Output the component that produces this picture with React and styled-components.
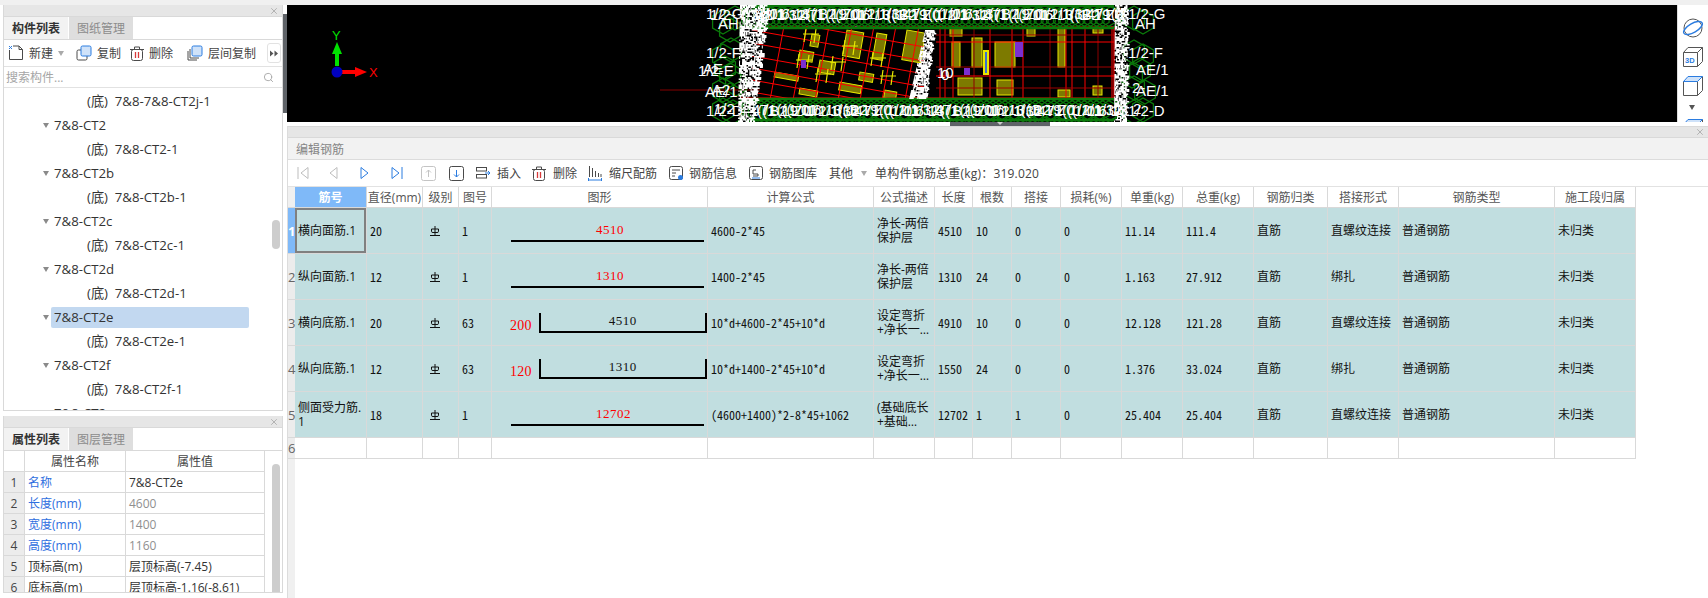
import React from "react";
import styled, { createGlobalStyle } from "styled-components";
import { X, Search } from "lucide-react";

const Global = createGlobalStyle`
  html, body { margin: 0; padding: 0; background: #fff; }
  body { font-family: "Open Sans", "Noto Sans CJK SC", sans-serif; font-size: 12px; color: #333; }
`;

const BLUE = "#2b7ce0";
const INK = "#4a4a4a";

const Page = styled.div`
  width: 1708px; height: 598px; overflow: hidden; background: #fff;
  display: flex; flex-direction: column;
`;
const TopStrip = styled.div`height: 5px; flex: none; background: #f0f0f0;`;
const Main = styled.div`flex: 1; min-height: 0; display: flex;`;
const LeftColumn = styled.div`
  width: 280px; flex: none; margin-left: 3px; display: flex; flex-direction: column; gap: 5px;
`;
const Panel = styled.section`
  border: 1px solid #d9d9d9; border-top: 0; box-sizing: border-box; background: #fff;
  display: flex; flex-direction: column; overflow: hidden; position: relative;
  height: ${p => p.$h}px; flex: none;
`;
const TitleBar = styled.div`
  height: ${p => p.$h ?? 11}px; flex: none; background: #e6e6e6; border-bottom: 1px solid #d9d9d9;
  display: flex; align-items: center; justify-content: flex-end; padding-right: 3px; color: #a8a8a8;
`;
const Tabs = styled.div`display: flex; height: 23px; flex: none; border-bottom: 1px solid #d9d9d9; box-sizing: border-box;`;
const Tab = styled.div`
  width: 64px; margin-right: 1px; display: flex; align-items: center; justify-content: center;
  font-weight: ${p => (p.$active ? 700 : 400)};
  color: ${p => (p.$active ? "#333" : "#8c8c8c")};
  background: ${p => (p.$active ? "#f2f2f2" : "#dedede")};
`;
const ListToolbar = styled.div`
  height: 27px; flex: none; display: flex; align-items: center; padding-left: 4px;
  border-bottom: 1px solid #e2e2e2; box-sizing: border-box; position: relative; color: #444;
`;
const ToolItem = styled.div`
  display: flex; align-items: center; gap: ${p => p.$gap ?? 5}px; margin-right: ${p => p.$mr ?? 12}px;
  margin-left: ${p => p.$ml ?? 0}px; white-space: nowrap; flex: none;
`;
const MoreButton = styled.div`
  position: absolute; right: 1px; top: 3px; width: 12px; height: 18px; border: 1px solid #e2e2e2; border-radius: 3px;
  display: flex; align-items: center; justify-content: center; background: #fff;
`;
const SearchBar = styled.div`
  height: 20px; flex: none; display: flex; align-items: center; justify-content: space-between;
  padding: 0 8px 0 2px; border-bottom: 1px solid #e2e2e2; color: #a6a6a6;
`;
const Tree = styled.div`padding-top: 1px; display: flex; flex-direction: column;`;
const TreeRow = styled.div`
  height: 24px; flex: none; display: flex; align-items: center; white-space: pre; font-size: 13.2px; color: #333;
  padding-left: ${p => (p.$child ? 80 : 39)}px;
`;
const Caret = styled.span`
  width: 0; height: 0; border-left: 3.5px solid transparent; border-right: 3.5px solid transparent;
  border-top: 5px solid ${p => p.$c || "#8a8a8a"}; margin-right: 2px; margin-left: ${p => p.$ml ?? 0}px; flex: none;
`;
const TreeLabel = styled.span`
  height: 21px; line-height: 21px; padding-left: 3px; border-radius: 2px;
  width: ${p => (p.$selected ? "195px" : "auto")};
  background: ${p => (p.$selected ? "#c2d8f0" : "transparent")};
`;
const ScrollThumb = styled.div`
  position: absolute; left: 268px; top: ${p => p.$top}px; width: 8px; height: ${p => p.$h}px; border-radius: 4px; background: #cdcdcd;
`;
const PropTable = styled.table`
  border-collapse: separate; border-spacing: 0; table-layout: fixed; width: 261px;
  td, th { border-right: 1px solid #d9d9d9; border-bottom: 1px solid #d9d9d9; height: 20px; padding: 0; box-sizing: content-box; font-weight: 400; }
`;
const PropHead = styled.th`text-align: center; color: #444;`;
const PropIndex = styled.td`text-align: center; background: #ececec; color: #444;`;
const PropName = styled.td`padding-left: 3px !important; color: ${p => (p.$blue ? "#2f6fe0" : "#333")}; white-space: nowrap;`;
const PropValue = styled.td`padding-left: 3px !important; color: ${p => (p.$muted ? "#8f8f8f" : "#333")}; white-space: nowrap;`;

const RightColumn = styled.div`flex: 1; min-width: 0; display: flex; flex-direction: column;`;
const ViewRow = styled.div`height: 117px; flex: none; display: flex; align-items: center;`;
const Splitter = styled.div`
  width: 4px; height: 99px; flex: none; background: #5f6368; color: #ddd; display: flex; align-items: center; justify-content: center;
`;
const Canvas = styled.div`flex: 1; height: 117px; background: #000; min-width: 0; overflow: hidden;`;
const ViewTools = styled.div`
  width: 31px; height: 117px; flex: none; border-left: 1px solid #ddd; background: #fff; overflow: hidden;
  display: flex; flex-direction: column; align-items: center; padding-top: 13px; box-sizing: border-box; gap: 9px;
`;
const HandleRow = styled.div`height: 4px; flex: none; display: flex; justify-content: center; padding-left: 8px;`;
const Handle = styled.div`
  width: 100px; height: 4px; background: #5f6368; display: flex; justify-content: center;
  &::after { content: ""; border-left: 3px solid transparent; border-right: 3px solid transparent; border-top: 3px solid #ccc; height: 0; }
`;
const EditPanel = styled.section`
  flex: 1; min-height: 0; margin-left: 4px; border-left: 1px solid #dcdcdc; border-top: 1px solid #d9d9d9;
  display: flex; flex-direction: column;
`;
const EditHeader = styled.div`
  height: 21px; flex: none; background: #f2f2f2; border-bottom: 1px solid #dcdcdc; color: #858585;
  display: flex; align-items: center; padding-left: 8px;
`;
const EditToolbar = styled.div`
  height: 26px; flex: none; display: flex; align-items: center; color: #444; border-bottom: 1px solid #e2e2e2; box-sizing: content-box;
`;
const NavButton = styled.div`
  width: ${p => p.$w}px; flex: none; display: flex; align-items: center; justify-content: center;
`;
const Weight = styled.span`margin-left: 6px; white-space: nowrap; letter-spacing: .2px;`;
const GridArea = styled.div`
  flex: 1; background: linear-gradient(90deg, #f0f0f0 7px, transparent 7px); 
`;
const Grid = styled.table`
  border-collapse: separate; border-spacing: 0; table-layout: fixed; width: 1348px;
`;
const Head = styled.th`
  height: 20px; padding: 0; font-weight: ${p => (p.$active ? 700 : 400)};
  background: ${p => (p.$active ? "#7fb9f8" : "#fff")}; color: ${p => (p.$active ? "#fff" : "#555")};
  border-right: 1px solid #d9d9d9; border-bottom: 1px solid #d9d9d9; white-space: nowrap; overflow: hidden; text-align: center;
`;
const Corner = styled.th`padding: 0; background: #f0f0f0; border-bottom: 1px solid #d9d9d9;`;
const RowHead = styled.td`
  padding: 0; text-align: center; overflow: visible; white-space: nowrap; font-size: 13px;
  background: ${p => (p.$active ? "#7fb9f8" : "#ececec")};
  color: ${p => (p.$active ? "#fff" : "#666")}; font-weight: ${p => (p.$active ? 700 : 400)};
  border-bottom: 1px solid #d9d9d9;
`;
const Cell = styled.td`
  height: ${p => (p.$empty ? 20 : 45)}px; padding: 0 0 0 3px; box-sizing: content-box; line-height: 14px; overflow: hidden;
  background: ${p => (p.$empty ? "#fff" : "#c1dee0")}; color: #111;
  border-right: 1px solid #d9d9d9; border-bottom: 1px solid #d9d9d9;
  font-family: ${p => (p.$mono ? `"Noto Sans CJK SC", sans-serif` : `"Open Sans", "Noto Sans CJK SC", sans-serif`)};
  font-feature-settings: ${p => (p.$mono ? `"hwid" 1` : "normal")};
  white-space: nowrap;
`;
const SelectedCell = styled(Cell)`
  box-shadow: inset 0 0 0 2px #808080; padding-left: 3px;
`;
const StraightShape = styled.div`
  margin-left: 16px; width: 193px; border-bottom: 2px solid #000; height: 18px; margin-top: 3px;
  box-sizing: content-box; color: #f00; text-indent: 85px; font-family: "Liberation Serif", serif;
  font-size: 13px; letter-spacing: .5px; line-height: 16px;
`;
const HookShape = styled.div`display: flex; align-items: flex-end; margin-left: 15px; margin-top: 2px;`;
const HookLength = styled.span`
  width: 29px; color: #f00; font-size: 14px; line-height: 16px; font-family: "Liberation Serif", serif; letter-spacing: .2px;
`;
const HookBar = styled.div`
  width: 166px; height: 18px; border: 2px solid #000; border-top: 0; text-align: center; line-height: 15px; color: #111;
  font-family: "Liberation Serif", serif; font-size: 13px; letter-spacing: .5px; margin-bottom: 1px;
`;
const GradeMark = styled.svg`display: block; margin-left: 4px;`;

/* ---------- icons ---------- */
const I = ({ s = 16, w, h, children, vb }) => (
  <svg width={w || s} height={h || s} viewBox={vb || `0 0 ${w || s} ${h || s}`} fill="none" style={{ display: "block", flex: "none" }}>{children}</svg>
);
const NewIcon = () => (
  <I s={16}>
    <path d="M1.5 5v9.5h13V4.5L11 1H5" stroke={INK} />
    <path d="M11 1v3.5h3.5" stroke={INK} />
    <path d="M1 1h1v1H1zM3 1h1v1H3zM2 2h1v1H2zM1 3h1v1H1zM3 3h1v1H3z" fill={BLUE} />
  </I>
);
const CopyIcon = () => (
  <I s={16}>
    <rect x="1" y="5" width="10" height="10" rx="1.5" stroke={INK} />
    <rect x="5" y="1" width="10" height="10" rx="1.5" fill="#cfe2f9" stroke={BLUE} />
  </I>
);
const TrashIcon = () => (
  <I w={14} h={15}>
    <rect x="1.5" y="3.5" width="11" height="11" rx="2" stroke={INK} />
    <path d="M0 3.5h14M4.5 3V1h5v2" stroke={INK} />
    <path d="M5.5 6v6M8.5 6v6" stroke="#d83a3a" strokeWidth="1.3" />
  </I>
);
const FloorCopyIcon = () => (
  <I s={16}>
    <path d="M1 6v9h9M3 4v9h9" stroke={INK} />
    <rect x="5" y="1" width="10" height="10" rx="1.5" fill="#cfe2f9" stroke={BLUE} />
  </I>
);
const More = () => <I w={8} h={7}><path d="M0 .5l3.5 3-3.5 3zM4.5 .5l3.5 3-3.5 3z" fill="#555" /></I>;
const NavFirst = () => <I w={12} h={14}><path d="M1 1v12M11 1.5L4 7l7 5.5z" stroke="#bdbdbd" /></I>;
const NavPrev = () => <I w={9} h={14}><path d="M8 1.5L1 7l7 5.5z" stroke="#bdbdbd" /></I>;
const NavNext = () => <I w={9} h={14}><path d="M1 1.5L8 7l-7 5.5z" stroke={BLUE} /></I>;
const NavLast = () => <I w={12} h={14}><path d="M11 1v12M1 1.5L8 7l-7 5.5z" stroke={BLUE} /></I>;
const UpBox = () => <I s={15}><rect x=".5" y=".5" width="14" height="14" rx="2" stroke="#c4c4c4" /><path d="M7.5 11V4M5 6.5l2.5-2.5L10 6.5" stroke="#c4c4c4" /></I>;
const DownBox = () => <I s={15}><rect x=".5" y=".5" width="14" height="14" rx="2" stroke={INK} /><path d="M7.5 4v7M5 8.5L7.5 11 10 8.5" stroke={BLUE} /></I>;
const InsertIcon = () => <I w={15} h={12}><rect x=".5" y=".5" width="10" height="3.5" stroke={INK} /><rect x=".5" y="7.5" width="10" height="3.5" stroke={INK} /><path d="M9 6h5M12 4l2 2-2 2" stroke={BLUE} /></I>;
const ScaleIcon = () => <I w={14} h={15}><path d="M1.5 0v11M4.5 2v9M7.5 5v6M10.5 7v4M13 8v3" stroke={INK} /><path d="M0 14h14M.5 12v3M13.5 12v3" stroke={BLUE} /></I>;
const InfoIcon = () => <I s={15}><rect x=".5" y=".5" width="13" height="13" rx="2" stroke={INK} /><path d="M3 4h8M3 7h4M3 10h3" stroke={INK} /><circle cx="11.5" cy="11.5" r="2.5" fill={BLUE} /></I>;
const LibraryIcon = () => <I s={15}><rect x=".5" y=".5" width="13" height="13" rx="2" stroke={INK} /><path d="M4 8V4h3M4 8h5v2H4" stroke={INK} /><path d="M3 12h8" stroke={BLUE} /></I>;
const SphereIcon = () => <I w={22} h={20}><ellipse cx="11" cy="10" rx="9" ry="9" stroke="#555" /><ellipse cx="11" cy="10" rx="10.5" ry="4.5" transform="rotate(-30 11 10)" stroke={BLUE} strokeWidth="1.4" /></I>;
const Cube3D = () => (
  <svg width="20" height="20" viewBox="0 0 20 20" fill="none" style={{ display: "block", flex: "none" }}>
    <path d="M.5 5.5h14v14H.5zM.5 5.5L5 .5h14.5v14l-5 5M14.5 5.5l5-5" stroke="#555" />
    <text x="2" y="16" fontSize="7.5" fontWeight="700" fill={BLUE} fontFamily="Liberation Sans">3D</text>
  </svg>
);
const CubeTop = ({ fill }) => <I s={20}><path d="M.5 5.5h14v14H.5zM14.5 19.5l5-5V.5" stroke="#555" /><path d="M.5 5.5L5 .5h14.5l-5 5z" fill={fill} stroke={BLUE} /></I>;
const Grade = () => (
  <GradeMark width="10" height="10" viewBox="0 0 10 10" fill="none">
    <path d="M1.5 3v2.5Q1.5 6.5 3 6.5h4Q8.5 6.5 8.5 5.5V3zM5 0v9M0 9.5h10" stroke="#111" />
  </GradeMark>
);

/* ---------- CAD drawing ---------- */
const rnd = (() => { let s = 4711; return () => ((s = (s * 16807) % 2147483647) / 2147483647); })();
const noise = (x0top, x1top, x0bot, x1bot, yTop, yBot, density = 0.7) => {
  let d = "";
  for (let y = yTop; y < yBot; y += 1.5) {
    const t = (y - yTop) / (yBot - yTop);
    const a = x0top + (x0bot - x0top) * t, b = x1top + (x1bot - x1top) * t;
    for (let x = a; x < b; x += 1.5) {
      if (rnd() < density) {
        const w = 1 + Math.floor(rnd() * 3);
        d += `M${x.toFixed(1)} ${y}h${w}v1.5h-${w}z`;
      }
    }
  }
  return d;
};
const hex = (cx, cy, r) => {
  const p = [];
  for (let i = 0; i < 6; i++) { const a = Math.PI / 3 * i + Math.PI / 6; p.push(`${(cx + r * Math.cos(a)).toFixed(1)},${(cy + r * Math.sin(a)).toFixed(1)}`); }
  return p.join(" ");
};
const bandTexts = ["1/2", "1/1", "1/12", "31", "47", "/1", "(((", "1/01", "11", "6", "13", "((1", "B2", "19", "Z0"];
const topX = Array.from({ length: 30 }, (_, i) => 752 + i * 12.2);
const hexRows = [];
topX.forEach(x => { hexRows.push([x, 16, 12]); hexRows.push([x + 6, 17, 11]); hexRows.push([x, 111, 12]); hexRows.push([x + 6, 110, 11]); });
[[723, 22], [730, 30], [735, 18], [723, 56], [731, 50], [725, 68], [730, 75], [723, 90], [730, 95], [736, 84], [723, 110], [733, 112],
 [1143, 22], [1134, 18], [1143, 56], [1134, 52], [1140, 70], [1132, 76], [1145, 92], [1134, 88], [1143, 110], [1134, 112]]
  .forEach(([x, y]) => hexRows.push([x, y, 12]));

const sideLabels = [
  [706, 19, "1/2-G"], [718, 29, "AH"], [710, 20, "1/2-"], [706, 58, "1/2-F"], [698, 76, "1/2-E"], [703, 74, "AE"], [705, 97, "AE/1"], [712, 95, "A2"], [706, 116, "1/2-D"], [714, 114, "1/2"],
  [1128, 19, "1/2-G"], [1135, 29, "AH"], [1128, 58, "1/2-F"], [1136, 75, "AE/1"], [1136, 96, "AE/1"], [1132, 93, "2-"], [1128, 116, "1/2-D"], [1133, 114, "2"],
  [937, 78, "10"], [941, 80, "0"],
];
const oliveLeft = [
  [847, 30, 17, 26], [877, 33, 10, 26], [907, 30, 19, 30], [800, 50, 14, 10], [820, 60, 16, 12], [860, 72, 14, 8], [840, 82, 22, 8], [775, 72, 24, 5], [800, 88, 18, 6], [885, 90, 12, 8], [812, 34, 8, 12],
];
const oliveRight = [[995, 42, 20, 25], [972, 38, 10, 29], [952, 42, 8, 25], [1058, 28, 7, 39], [958, 78, 24, 17], [997, 80, 16, 15], [1058, 90, 12, 7], [1093, 86, 9, 9], [1093, 28, 10, 5], [1027, 28, 8, 8], [950, 28, 12, 8]];
const redV = [940, 945, 953, 974, 990, 1012, 1023, 1050, 1066, 1072, 1085, 1098, 1112];
const redH = [35, 42, 67, 76, 88];
const noisePaths = [
  noise(740, 768, 738, 754, 5, 122),
  noise(1115, 1127, 1114, 1127, 5, 122),
  noise(925, 934, 909, 926, 30, 99, 0.75),
];
const CadDrawing = () => (
  <svg width="1389" height="117" viewBox="287 5 1389 117" style={{ display: "block" }} fontFamily="Liberation Sans">
    <defs>
      <clipPath id="cad-left"><rect x="752" y="26" width="172" height="72" /></clipPath>
    </defs>
    <path d="M660 90h100" stroke="#5a0000" strokeWidth="1.5" />
    <g clipPath="url(#cad-left)">
      {oliveLeft.map(([x, y, w, h], i) => (
        <rect key={i} x={x} y={y} width={w} height={h} fill="#7d7a00" stroke="#e8e800" strokeWidth="1" transform={`rotate(10 ${x} ${y})`} />
      ))}
      {[770, 793, 815, 838, 860, 882, 905].map((x, i) => (
        <path key={i} d={`M${x + 14} 26L${x} 100`} stroke="#f00" strokeWidth="1" />
      ))}
      {[16, 30, 43, 56, 68, 80, 92].map((y, i) => (
        <path key={i} d={`M752 ${y}L930 ${y + 32}`} stroke="#f00" strokeWidth="1" />
      ))}
      {[[803, 34], [842, 46], [870, 58], [815, 74], [880, 76], [796, 60], [830, 62]].map(([x, y], i) => (
        <path key={i} d={`M${x} ${y}h16M${x + 3} ${y - 6}l-2 14M${x + 13} ${y - 5}l-2 14`} stroke="#e8e800" strokeWidth="1.2" fill="none" />
      ))}
      <rect x="801" y="60" width="5" height="8" fill="#7a2fd0" />
      <rect x="855" y="26" width="5" height="2" fill="#7a2fd0" />
    </g>
    {oliveRight.map(([x, y, w, h], i) => (
      <rect key={i} x={x} y={y} width={w} height={h} fill="#7d7a00" stroke="#e8e800" strokeWidth="1" />
    ))}
    {redV.map((x, i) => <path key={i} d={`M${x} 26V98`} stroke={i % 4 === 3 ? "#8b0000" : "#f00"} strokeWidth="1" />)}
    {redH.map((y, i) => <path key={i} d={`M936 ${y}H1114`} stroke={i % 2 ? "#f00" : "#a00000"} strokeWidth="1" />)}
    <path d="M752 27H1114M740 98H1114M1114 27V98" stroke="#f00" strokeWidth="1.2" fill="none" />
    <rect x="1015" y="42" width="8" height="15" fill="#7a2fd0" />
    <rect x="964" y="68" width="6" height="7" fill="#7a2fd0" />
    <rect x="983" y="50" width="6" height="25" fill="#e8e800" />
    <rect x="985" y="52" width="2" height="21" fill="#3a6fd0" />
    <g fill="none" stroke="#0b7a0b" strokeWidth="1.3">
      {hexRows.map(([x, y, r], i) => <polygon key={i} points={hex(x, y, r)} />)}
    </g>
    <path d="M752 6H1114M752 28H1114M752 99H1114M752 120H1114" stroke="#0b7a0b" strokeWidth="2.5" />
    <path d={noisePaths.join("")} fill="#fff" />
    <g fill="#fff" fontSize="15">
      {topX.map((x, i) => <text key={"t" + i} x={x} y={20}>{bandTexts[i % bandTexts.length]}</text>)}
      {topX.map((x, i) => <text key={"u" + i} x={x + 5} y={19}>{bandTexts[(i + 7) % bandTexts.length]}</text>)}
      {topX.map((x, i) => <text key={"b" + i} x={x} y={115}>{bandTexts[(i + 4) % bandTexts.length]}</text>)}
      {topX.map((x, i) => <text key={"c" + i} x={x + 5} y={116}>{bandTexts[(i + 11) % bandTexts.length]}</text>)}
      {sideLabels.map(([x, y, t]) => <text key={`${x}-${y}`} x={x} y={y}>{t}</text>)}
    </g>
    <g>
      <path d="M337 66V53" stroke="#00e000" strokeWidth="4" />
      <path d="M337 42l5 12h-10z" fill="#00e000" />
      <path d="M341 72h15" stroke="#f00" strokeWidth="4" />
      <path d="M367 72l-12-5v10z" fill="#f00" />
      <circle cx="337" cy="72" r="5.5" fill="#0000c0" />
      <text x="332" y="40" fontSize="13" fill="#00e000">Y</text>
      <text x="369" y="77" fontSize="13" fill="#f00">X</text>
    </g>
  </svg>
);

/* ---------- data ---------- */
const treeRows = [
  { child: 1, t: "(底)  7&8-7&8-CT2j-1" },
  { t: "7&8-CT2" }, { child: 1, t: "(底)  7&8-CT2-1" },
  { t: "7&8-CT2b" }, { child: 1, t: "(底)  7&8-CT2b-1" },
  { t: "7&8-CT2c" }, { child: 1, t: "(底)  7&8-CT2c-1" },
  { t: "7&8-CT2d" }, { child: 1, t: "(底)  7&8-CT2d-1" },
  { t: "7&8-CT2e", sel: 1 }, { child: 1, t: "(底)  7&8-CT2e-1" },
  { t: "7&8-CT2f" }, { child: 1, t: "(底)  7&8-CT2f-1" },
  { t: "7&8-CT2g" },
];
const props = [
  ["名称", "7&8-CT2e", 1, 0], ["长度(mm)", "4600", 1, 1], ["宽度(mm)", "1400", 1, 1], ["高度(mm)", "1160", 1, 1],
  ["顶标高(m)", "层顶标高(-7.45)", 0, 0], ["底标高(m)", "层顶标高-1.16(-8.61)", 0, 0],
];
const cols = [
  ["", 7], ["筋号", 72], ["直径(mm)", 56], ["级别", 36], ["图号", 33], ["图形", 216], ["计算公式", 166], ["公式描述", 61], ["长度", 38], ["根数", 39],
  ["搭接", 49], ["损耗(%)", 61], ["单重(kg)", 61], ["总重(kg)", 71], ["钢筋归类", 74], ["搭接形式", 71], ["钢筋类型", 156], ["施工段归属", 81],
];
const D1 = ["净长-两倍", "保护层"], D2 = ["设定弯折", "+净长一…"], D3 = ["(基础底长", "+基础…"];
const bars = [
  { name: ["横向面筋.1"], dia: "20", no: "1", shape: ["s", "4510"], f: "4600-2*45", d: D1, len: "4510", n: "10", lap: "0", u: "11.14", tot: "111.4", joint: "直螺纹连接" },
  { name: ["纵向面筋.1"], dia: "12", no: "1", shape: ["s", "1310"], f: "1400-2*45", d: D1, len: "1310", n: "24", lap: "0", u: "1.163", tot: "27.912", joint: "绑扎" },
  { name: ["横向底筋.1"], dia: "20", no: "63", shape: ["h", "4510", "200"], f: "10*d+4600-2*45+10*d", d: D2, len: "4910", n: "10", lap: "0", u: "12.128", tot: "121.28", joint: "直螺纹连接" },
  { name: ["纵向底筋.1"], dia: "12", no: "63", shape: ["h", "1310", "120"], f: "10*d+1400-2*45+10*d", d: D2, len: "1550", n: "24", lap: "0", u: "1.376", tot: "33.024", joint: "绑扎" },
  { name: ["侧面受力筋.", "1"], dia: "18", no: "1", shape: ["s", "12702"], f: "(4600+1400)*2-8*45+1062", d: D3, len: "12702", n: "1", lap: "1", u: "25.404", tot: "25.404", joint: "直螺纹连接" },
];
const Lines = ({ v }) => v.map((l, i) => <React.Fragment key={i}>{i > 0 && <br />}{l}</React.Fragment>);

const Shape = ({ s }) =>
  s[0] === "s" ? (
    <StraightShape>{s[1]}</StraightShape>
  ) : (
    <HookShape><HookLength>{s[2]}</HookLength><HookBar>{s[1]}</HookBar></HookShape>
  );

export default function App() {
  return (
    <Page>
      <Global />
      <TopStrip />
      <Main>
        <LeftColumn>
          <Panel $h={406}>
            <TitleBar><X size={10} /></TitleBar>
            <Tabs><Tab $active>构件列表</Tab><Tab>图纸管理</Tab></Tabs>
            <ListToolbar>
              <ToolItem $mr={5}><NewIcon />新建</ToolItem>
              <ToolItem $mr={10}><Caret $c="#aaa" /></ToolItem>
              <ToolItem $mr={9}><CopyIcon />复制</ToolItem>
              <ToolItem $mr={14}><TrashIcon />删除</ToolItem>
              <ToolItem><FloorCopyIcon />层间复制</ToolItem>
              <MoreButton><More /></MoreButton>
            </ListToolbar>
            <SearchBar>搜索构件...<Search size={11} color="#a6a6a6" /></SearchBar>
            <Tree>
              {treeRows.map(r => (
                <TreeRow key={r.t} $child={r.child}>
                  {!r.child && <Caret />}
                  <TreeLabel $selected={r.sel}>{r.t}</TreeLabel>
                </TreeRow>
              ))}
            </Tree>
            <ScrollThumb $top={215} $h={29} />
          </Panel>
          <Panel $h={177}>
            <TitleBar><X size={10} /></TitleBar>
            <Tabs><Tab $active>属性列表</Tab><Tab>图层管理</Tab></Tabs>
            <PropTable>
              <colgroup><col width="21" /><col width="101" /><col width="139" /></colgroup>
              <thead>
                <tr><PropHead /><PropHead>属性名称</PropHead><PropHead>属性值</PropHead></tr>
              </thead>
              <tbody>
                {props.map(([n, v, blue, muted], i) => (
                  <tr key={n}>
                    <PropIndex>{i + 1}</PropIndex>
                    <PropName $blue={blue}>{n}</PropName>
                    <PropValue $muted={muted}>{v}</PropValue>
                  </tr>
                ))}
              </tbody>
            </PropTable>
            <ScrollThumb $top={48} $h={140} />
          </Panel>
        </LeftColumn>
        <RightColumn>
          <ViewRow>
            <Splitter />
            <Canvas><CadDrawing /></Canvas>
            <ViewTools>
              <SphereIcon />
              <Cube3D />
              <CubeTop fill="#cfe2f9" />
              <Caret $c="#555" />
              <CubeTop fill="#cfe2f9" />
            </ViewTools>
          </ViewRow>
          <HandleRow><Handle /></HandleRow>
          <EditPanel>
            <TitleBar $h={10}><X size={10} /></TitleBar>
            <EditHeader>编辑钢筋</EditHeader>
            <EditToolbar>
              <NavButton $w={29}><NavFirst /></NavButton>
              <NavButton $w={32}><NavPrev /></NavButton>
              <NavButton $w={31}><NavNext /></NavButton>
              <NavButton $w={33}><NavLast /></NavButton>
              <NavButton $w={30}><UpBox /></NavButton>
              <NavButton $w={27}><DownBox /></NavButton>
              <ToolItem $gap={6} $mr={11} $ml={6}><InsertIcon />插入</ToolItem>
              <ToolItem $gap={7} $mr={11}><TrashIcon />删除</ToolItem>
              <ToolItem $gap={7}><ScaleIcon />缩尺配筋</ToolItem>
              <ToolItem $gap={5}><InfoIcon />钢筋信息</ToolItem>
              <ToolItem $gap={5}><LibraryIcon />钢筋图库</ToolItem>
              <ToolItem $gap={5} $mr={0}>其他<Caret $c="#aaa" $ml={3} /></ToolItem>
              <Weight>单构件钢筋总重(kg)：319.020</Weight>
            </EditToolbar>
            <GridArea>
              <Grid>
                <colgroup>{cols.map(([, w], i) => <col key={i} width={w} />)}</colgroup>
                <thead>
                  <tr>
                    <Corner />
                    {cols.slice(1).map(([t], i) => <Head key={t} $active={i === 0}>{t}</Head>)}
                  </tr>
                </thead>
                <tbody>
                  {bars.map((b, i) => {
                    const NameCell = i === 0 ? SelectedCell : Cell;
                    return (
                      <tr key={i}>
                        <RowHead $active={i === 0}>{i + 1}</RowHead>
                        <NameCell><Lines v={b.name} /></NameCell>
                        <Cell $mono>{b.dia}</Cell>
                        <Cell><Grade /></Cell>
                        <Cell $mono>{b.no}</Cell>
                        <Cell><Shape s={b.shape} /></Cell>
                        <Cell $mono>{b.f}</Cell>
                        <Cell><Lines v={b.d} /></Cell>
                        <Cell $mono>{b.len}</Cell>
                        <Cell $mono>{b.n}</Cell>
                        <Cell $mono>{b.lap}</Cell>
                        <Cell $mono>0</Cell>
                        <Cell $mono>{b.u}</Cell>
                        <Cell $mono>{b.tot}</Cell>
                        <Cell>直筋</Cell>
                        <Cell>{b.joint}</Cell>
                        <Cell>普通钢筋</Cell>
                        <Cell>未归类</Cell>
                      </tr>
                    );
                  })}
                  <tr>
                    <RowHead>6</RowHead>
                    {cols.slice(1).map(([t]) => <Cell key={t} $empty />)}
                  </tr>
                </tbody>
              </Grid>
            </GridArea>
          </EditPanel>
        </RightColumn>
      </Main>
    </Page>
  );
}
